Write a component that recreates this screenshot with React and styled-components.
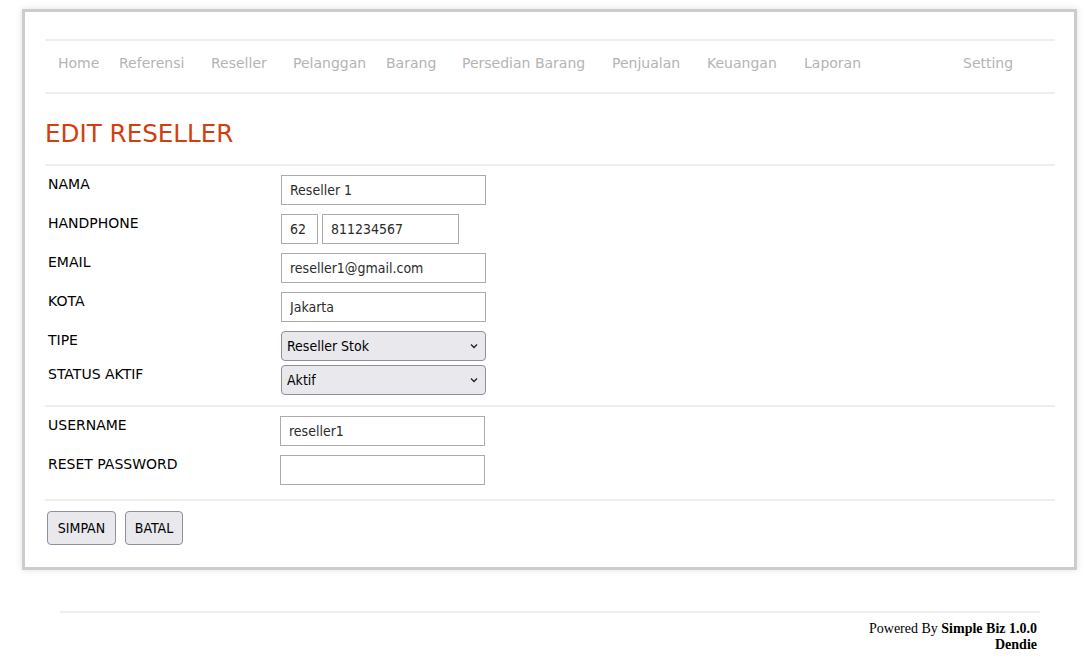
import React from 'react';
import styled, { createGlobalStyle } from 'styled-components';

const GlobalStyle = createGlobalStyle`
  html, body {
    margin: 0;
    padding: 0;
    background: #fff;
  }
  body {
    font-family: "DejaVu Sans", Verdana, sans-serif;
  }
`;

const Page = styled.div`
  width: 1092px;
  padding-top: 9px;
`;

const Card = styled.div`
  box-sizing: border-box;
  width: 1055px;
  margin-left: 22px;
  border: 3px solid #cccccc;
  box-shadow: 0 0 7px rgba(0, 0, 0, 0.12);
  background: #fff;
  padding: 27px 19px 22px 20px;
`;

const Nav = styled.ul`
  list-style: none;
  margin: 0;
  display: flex;
  border-top: 2px solid #eeeeee;
  border-bottom: 2px solid #eeeeee;
  padding: 14px 0 20px 13px;
`;

const NavItem = styled.li`
  flex: ${p => (p.w ? `0 0 ${p.w}px` : '1 1 auto')};
  font-size: 14px;
  line-height: 17px;
  color: #b4b4b4;
  white-space: nowrap;
`;

const Title = styled.h1`
  margin: 0;
  padding: 26px 0 16px;
  font-size: 24.6px;
  line-height: 28px;
  font-weight: normal;
  color: #d0400f;
`;

const Section = styled.div`
  border-top: 2px solid #eeeeee;
  padding: ${p => p.pad};
`;

const Row = styled.div`
  display: flex;
  align-items: flex-start;
  margin-bottom: ${p => p.gap || 0}px;
`;

const Label = styled.div`
  flex: 0 0 ${p => p.w}px;
  padding-top: 1px;
  font-size: 14px;
  line-height: 17px;
  color: #000;
`;

const Input = styled.input`
  box-sizing: border-box;
  width: ${p => p.w || 205}px;
  height: 30px;
  margin: 0;
  margin-right: ${p => p.mr || 0}px;
  border: 1px solid #ababab;
  padding: 0 8px;
  font-family: "DejaVu Sans Condensed", "Noto Sans", sans-serif;
  font-size: 14px;
  color: #2b2b2b;
  background: #fff;
  outline: none;
`;

const SelectWrap = styled.div`
  position: relative;
  width: 205px;
  height: 30px;
`;

const Select = styled.select`
  box-sizing: border-box;
  appearance: none;
  width: 100%;
  height: 30px;
  margin: 0;
  border: 1px solid #8f8f9d;
  border-radius: 4px;
  background: #e9e9ed;
  padding: 0 24px 0 5px;
  font-family: "DejaVu Sans Condensed", "Noto Sans", sans-serif;
  font-size: 14px;
  color: #000;
`;

const Chevron = styled.svg`
  position: absolute;
  right: 8px;
  top: 11px;
  pointer-events: none;
`;

const Button = styled.button`
  box-sizing: border-box;
  width: ${p => p.w}px;
  height: 34px;
  margin: 0 9px 0 0;
  padding: 0;
  border: 1px solid #8f8f9d;
  border-radius: 4px;
  background: #e9e9ed;
  font-family: "DejaVu Sans Condensed", "Noto Sans", sans-serif;
  font-size: 14px;
  color: #000;
`;

const Footer = styled.div`
  margin: 41px 52px 0 60px;
  border-top: 2px solid #eeeeee;
  padding: 8px 3px 10px 0;
  text-align: right;
  font-family: "Liberation Serif", "Times New Roman", serif;
  font-size: 14px;
  line-height: 16px;
  color: #000;
`;

const menu = [
  ['Home', 61],
  ['Referensi', 92],
  ['Reseller', 82],
  ['Pelanggan', 93],
  ['Barang', 76],
  ['Persedian Barang', 150],
  ['Penjualan', 95],
  ['Keuangan', 97],
  ['Laporan', 159],
  ['Setting', 0],
];

function Dropdown({ value, options }) {
  return (
    <SelectWrap>
      <Select defaultValue={value}>
        {options.map(o => (
          <option key={o}>{o}</option>
        ))}
      </Select>
      <Chevron width="8" height="8" viewBox="0 0 8 8">
        <path d="M1 2.5 L4 5.5 L7 2.5" fill="none" stroke="#222" strokeWidth="1.3" />
      </Chevron>
    </SelectWrap>
  );
}

export default function App() {
  return (
    <Page>
      <GlobalStyle />
      <Card>
        <Nav>
          {menu.map(([name, w]) => (
            <NavItem key={name} w={w}>{name}</NavItem>
          ))}
        </Nav>

        <Title>EDIT RESELLER</Title>

        <Section pad="9px 0 10px 3px">
          <Row gap={9}>
            <Label w={233}>NAMA</Label>
            <Input defaultValue="Reseller 1" />
          </Row>
          <Row gap={9}>
            <Label w={233}>HANDPHONE</Label>
            <Input w={37} mr={4} defaultValue="62" />
            <Input w={137} defaultValue="811234567" />
          </Row>
          <Row gap={9}>
            <Label w={233}>EMAIL</Label>
            <Input defaultValue="reseller1@gmail.com" />
          </Row>
          <Row gap={9}>
            <Label w={233}>KOTA</Label>
            <Input defaultValue="Jakarta" />
          </Row>
          <Row gap={4}>
            <Label w={233}>TIPE</Label>
            <Dropdown value="Reseller Stok" options={['Reseller Stok', 'Reseller Dropship']} />
          </Row>
          <Row>
            <Label w={233}>STATUS AKTIF</Label>
            <Dropdown value="Aktif" options={['Aktif', 'Tidak Aktif']} />
          </Row>
        </Section>

        <Section pad="9px 0 14px 3px">
          <Row gap={9}>
            <Label w={232}>USERNAME</Label>
            <Input defaultValue="reseller1" />
          </Row>
          <Row>
            <Label w={232}>RESET PASSWORD</Label>
            <Input type="password" />
          </Row>
        </Section>

        <Section pad="10px 0 0 2px">
          <Button w={69}>SIMPAN</Button>
          <Button w={58}>BATAL</Button>
        </Section>
      </Card>

      <Footer>
        Powered By <b>Simple Biz 1.0.0</b>
        <br />
        <b>Dendie</b>
      </Footer>
    </Page>
  );
}
